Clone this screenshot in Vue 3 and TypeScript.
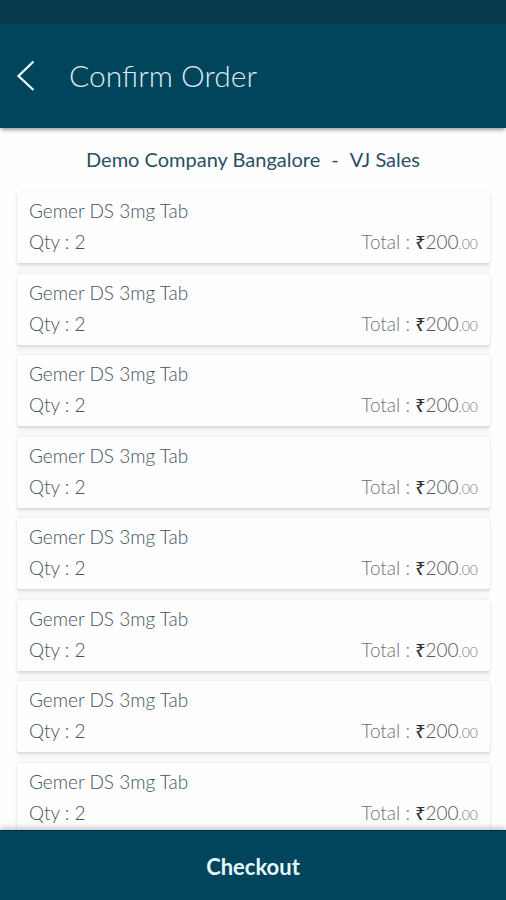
<script setup lang="ts">
interface OrderItem {
  id: number
  name: string
  qty: number
  total: number
}

const company = 'Demo Company Bangalore'
const branch = 'VJ Sales'

const items: OrderItem[] = Array.from({ length: 8 }, (_, index) => ({
  id: index + 1,
  name: 'Gemer DS 3mg Tab',
  qty: 2,
  total: 200,
}))

const rupees = (value: number): string => Math.floor(value).toString()
const paise = (value: number): string => value.toFixed(2).slice(-3)
</script>

<template>
  <div class="screen">
    <div class="status-bar"></div>
    <header class="app-bar">
      <button class="back" type="button" aria-label="Back">
        <svg width="20" height="32" viewBox="0 0 20 32" fill="none" aria-hidden="true">
          <path d="M17.500 2.500 2.500 17 17.500 31" stroke="currentColor" stroke-width="2.300" />
        </svg>
      </button>
      <h1 class="title">Confirm Order</h1>
    </header>

    <main class="content">
      <h2 class="customer">
        <span>{{ company }}</span>
        <span>-</span>
        <span>{{ branch }}</span>
      </h2>
      <ul class="items">
        <li v-for="item in items" :key="item.id" class="card">
          <p class="name">{{ item.name }}</p>
          <div class="row">
            <span class="qty">Qty : {{ item.qty }}</span>
            <span class="total">Total : <span class="sign">₹</span><span class="amount">{{ rupees(item.total) }}</span><span class="paise">{{ paise(item.total) }}</span></span>
          </div>
        </li>
      </ul>
    </main>

    <button class="checkout" type="button">Checkout</button>
  </div>
</template>

<style>
body {
  margin: 0;
  background: #fefefe;
}
</style>

<style scoped>
.screen {
  display: flex;
  flex-direction: column;
  height: 100vh;
  overflow: hidden;
  background: #fefefe;
  font-family: Lato, "Noto Sans", sans-serif;
}

.status-bar {
  flex: none;
  height: 24px;
  background: #073b4c;
}

.app-bar {
  position: relative;
  z-index: 1;
  flex: none;
  display: flex;
  align-items: center;
  gap: 33px;
  height: 104px;
  padding: 0 16px 2px;
  box-sizing: border-box;
  background: #00455b;
  box-shadow: 0 3px 4px -1px rgba(0, 0, 0, 0.4);
  color: #dcebf5;
}

.back {
  display: flex;
  padding: 0;
  border: 0;
  background: none;
  color: #e8f8ff;
  cursor: pointer;
}

.title {
  margin: 0;
  font-size: 30px;
  line-height: 36px;
  font-weight: 300;
}

.content {
  flex: 1;
  min-height: 0;
  display: flex;
  flex-direction: column;
}

.customer {
  display: flex;
  justify-content: center;
  gap: 11px;
  margin: 0;
  padding: 19px 16px 21px;
  font-size: 20px;
  line-height: 24px;
  font-weight: 400;
  color: #2b4f63;
}

.items {
  flex: 1;
  min-height: 0;
  display: flex;
  flex-direction: column;
  justify-content: space-between;
  gap: 10px;
  margin: 0 16px -4px 17px;
  padding: 0;
  list-style: none;
  background: #f8f8f8;
}

.card {
  flex: none;
  padding: 3px 12px 6px;
  border-radius: 2px;
  background: #fefefe;
  box-shadow: 0 2px 3px rgba(0, 0, 0, 0.12), 0 0 2px rgba(0, 0, 0, 0.08);
  font-size: 19px;
  line-height: 31px;
  font-weight: 300;
}

.name {
  margin: 0;
  color: #41535f;
}

.row {
  display: flex;
  justify-content: space-between;
  color: #4c5257;
}

.total {
  color: #68727c;
}

.sign {
  font-family: "Noto Sans", sans-serif;
  font-weight: 500;
  font-size: 18px;
  line-height: 20px;
  color: #333333;
}

.amount {
  color: #55585b;
}

.paise {
  font-size: 14px;
  line-height: 20px;
  color: #777777;
}

.checkout {
  position: relative;
  z-index: 1;
  flex: none;
  height: 70px;
  padding: 2px 16px 0;
  border: 0;
  border-top: 1px solid #002b47;
  background: #00455b;
  box-shadow: 0 -2px 6px rgba(0, 0, 0, 0.25);
  color: #e8f8ff;
  font-family: inherit;
  font-size: 22px;
  line-height: 28px;
  font-weight: 700;
  cursor: pointer;
}
</style>
